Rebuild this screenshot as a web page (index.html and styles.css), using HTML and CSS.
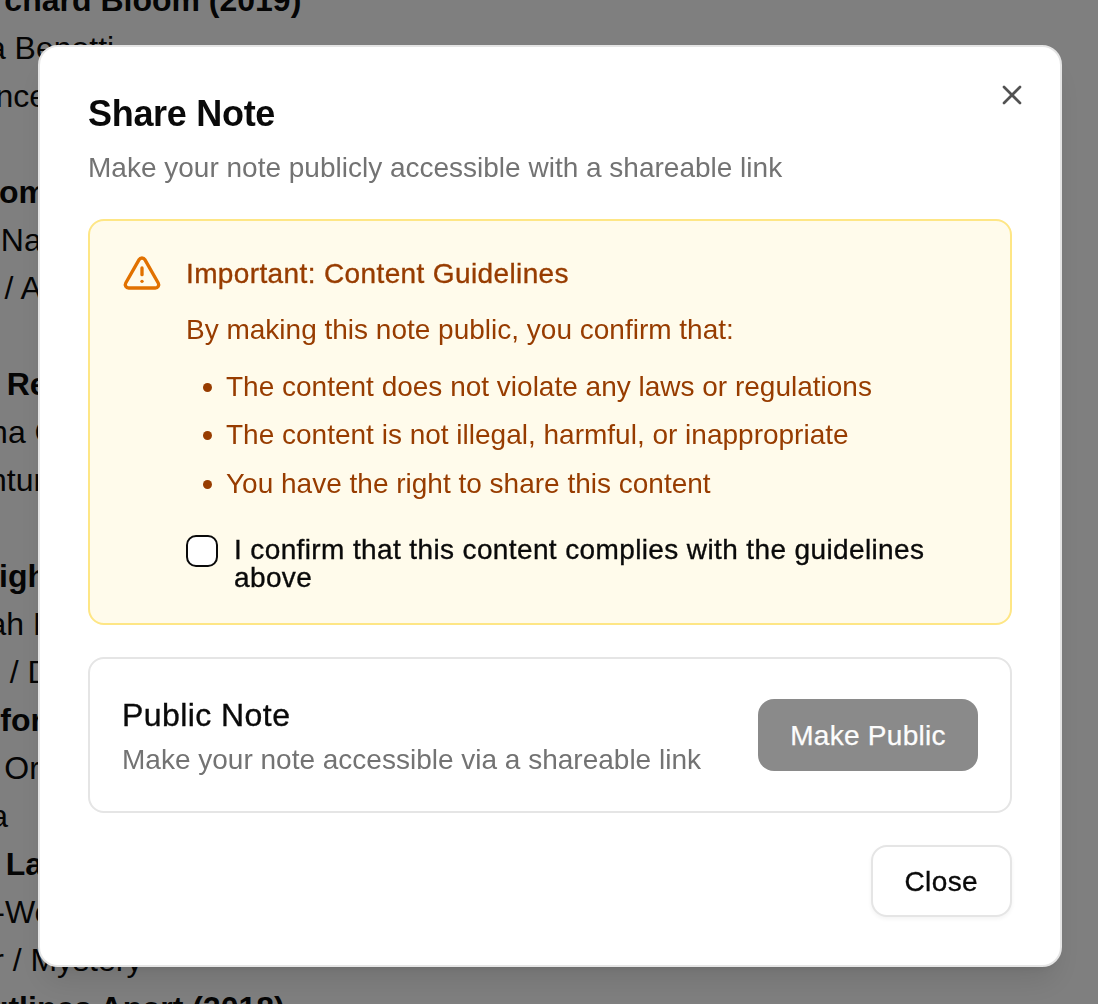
FILE: index.html
```html
<!DOCTYPE html>
<html lang="en">
<head>
<meta charset="utf-8">
<title>Share Note</title>
<link rel="stylesheet" href="styles.css">
</head>
<body>
<main class="notes">
  <p class="line title">Orchard Bloom (2019)</p>
  <p class="line left4">Lia Benotti</p>
  <p class="line">Since 2019</p>
  <p class="line blank">&nbsp;</p>
  <p class="line title">From Home (2020)</p>
  <p class="line">Li Nazari</p>
  <p class="line right2">Fi / Adventure</p>
  <p class="line blank">&nbsp;</p>
  <p class="line title far">Quiet Rest (2020)</p>
  <p class="line">Una Cole</p>
  <p class="line far">Adventure</p>
  <p class="line blank">&nbsp;</p>
  <p class="line title">Fright (2021)</p>
  <p class="line farther">Hannah Neil</p>
  <p class="line farther">Action / Drama</p>
  <p class="line title left4">In for It (2021)</p>
  <p class="line">Al Orin</p>
  <p class="line farther">Drama</p>
  <p class="line title farther2">Quiet Lanes (2018)</p>
  <p class="line left3">Hi-West</p>
  <p class="line widest">Thriller / Mystery</p>
  <p class="line title near">Outlines Apart (2018)</p>
</main>

<div class="overlay">
  <section class="dialog" role="dialog" aria-labelledby="share-title">
    <button class="dismiss" type="button" aria-label="Close">
      <svg class="dismiss-icon" viewBox="0 0 24 24" fill="none" stroke="currentColor" stroke-width="2" stroke-linecap="round" stroke-linejoin="round"><path d="M18 6 6 18"/><path d="m6 6 12 12"/></svg>
    </button>
    <header class="dialog-head">
      <h2 id="share-title" class="dialog-title">Share Note</h2>
      <p class="dialog-sub">Make your note publicly accessible with a shareable link</p>
    </header>

    <div class="warning">
      <svg class="warning-icon" viewBox="0 0 24 24" fill="none" stroke="currentColor" stroke-width="2" stroke-linecap="round" stroke-linejoin="round"><path d="m21.73 18-8-14a2 2 0 0 0-3.48 0l-8 14A2 2 0 0 0 4 21h16a2 2 0 0 0 1.73-3"/><path d="M12 9v4"/><path d="M12 17h.01"/></svg>
      <div class="warning-body">
        <h3 class="warning-title">Important: Content Guidelines</h3>
        <p class="warning-text">By making this note public, you confirm that:</p>
        <ul class="warning-list">
          <li>The content does not violate any laws or regulations</li>
          <li>The content is not illegal, harmful, or inappropriate</li>
          <li>You have the right to share this content</li>
        </ul>
        <label class="confirm">
          <input class="confirm-box" type="checkbox">
          <span class="confirm-text">I confirm that this content complies with the guidelines above</span>
        </label>
      </div>
    </div>

    <div class="public-card">
      <div class="public-info">
        <div class="public-title">Public Note</div>
        <div class="public-desc">Make your note accessible via a shareable link</div>
      </div>
      <button class="btn-primary" type="button">Make Public</button>
    </div>

    <footer class="dialog-foot">
      <button class="btn-outline" type="button">Close</button>
    </footer>
  </section>
</div>
</body>
</html>
```

FILE: styles.css
```css
* {
  box-sizing: border-box;
}

html,
body {
  height: 100%;
  margin: 0;
  overflow: hidden;
}

body {
  background: #fff;
  color: #0a0a0a;
  font-family: "Liberation Sans", Arial, sans-serif;
}

.notes {
  margin: -24px 0 0 -33px;
}

.line {
  margin: 0;
  font-size: 32px;
  line-height: 48px;
  white-space: nowrap;
}

.title {
  font-weight: 700;
}

.far {
  margin-left: -51px;
}

.farther {
  margin-left: -55px;
}

.farther2 {
  margin-left: -52px;
}

.widest {
  margin-left: -61px;
}

.near {
  margin-left: -3px;
}

.left4 {
  margin-left: -4px;
}

.left3 {
  margin-left: -3px;
}

.right2 {
  margin-left: 2px;
}

.overlay {
  position: fixed;
  inset: 0;
  display: flex;
  justify-content: center;
  align-items: flex-start;
  padding: 45px 0 0 2px;
  background: rgba(0, 0, 0, 0.5);
}

.dialog {
  position: relative;
  width: 1024px;
  padding: 48px;
  background: #fff;
  border: 2px solid #e5e5e5;
  border-radius: 20px;
  box-shadow: 0 20px 30px -6px rgba(0, 0, 0, 0.1), 0 8px 12px -8px rgba(0, 0, 0, 0.1);
}

.dismiss {
  position: absolute;
  top: 32px;
  right: 32px;
  display: flex;
  padding: 0;
  border: 0;
  background: none;
  color: #0a0a0a;
  opacity: 0.7;
}

.dismiss-icon {
  width: 32px;
  height: 32px;
}

.dialog-head {
  display: flex;
  flex-direction: column;
  gap: 16px;
}

/* medium-weight text: regular outlines slightly thickened and spaced */
.warning-title,
.confirm-text,
.public-title,
.btn-outline {
  font-weight: 400;
  letter-spacing: 0.0135em;
  -webkit-text-stroke: 0.35px currentColor;
}

/* text that sits one pixel low in its line box */
.dialog-title,
.dialog-sub,
.warning-title,
.warning-text,
.confirm-text,
.public-desc {
  padding-top: 1px;
  margin-bottom: -1px;
}

.dialog-title {
  margin-top: 0;
  font-size: 36px;
  line-height: 36px;
  font-weight: 700;
  letter-spacing: -0.3px;
}

.dialog-sub {
  margin-top: 0;
  font-size: 28px;
  line-height: 40px;
  color: #737373;
}

.warning {
  display: flex;
  gap: 24px;
  margin-top: 32px;
  padding: 32px;
  background: #fffbeb;
  border: 2px solid #fee685;
  border-radius: 16px;
  color: #973c00;
}

.warning-icon {
  flex: none;
  width: 40px;
  height: 40px;
  color: #e17100;
}

.warning-body {
  flex: 1;
  min-width: 0;
}

.warning-title {
  margin-top: 0;
  font-size: 28px;
  line-height: 40px;
}

.warning-text {
  margin-top: 16px;
  font-size: 28px;
  line-height: 40px;
}

.warning-list {
  display: flex;
  flex-direction: column;
  gap: 8.5px;
  margin: 17.5px 0 0;
  padding: 0 0 0 16.5px;
  list-style: none;
  font-size: 28px;
  line-height: 40px;
}

.warning-list li {
  display: flex;
  align-items: center;
  gap: 14.5px;
}

.warning-list li::before {
  content: "";
  flex: none;
  width: 9px;
  height: 9px;
  margin-top: 1px;
  border-radius: 50%;
  background: currentColor;
}

.confirm {
  display: flex;
  align-items: flex-start;
  gap: 16px;
  margin-top: 31.5px;
  color: #0a0a0a;
  font-size: 28px;
  line-height: 28px;
}

.confirm-box {
  appearance: none;
  flex: none;
  width: 32px;
  height: 32px;
  margin: 0;
  background: #fff;
  border: 2px solid #0a0a0a;
  border-radius: 10px;
}

.public-card {
  display: flex;
  justify-content: space-between;
  align-items: center;
  margin-top: 32px;
  padding: 32px;
  background: #fff;
  border: 2px solid #e5e5e5;
  border-radius: 16px;
}

.public-title {
  font-size: 32px;
  line-height: 48px;
}

.public-desc {
  font-size: 28px;
  line-height: 40px;
  color: #737373;
}

.btn-primary,
.btn-outline {
  height: 72px;
  padding: 2px 32px 0;
  border-radius: 16px;
  font-family: inherit;
  font-size: 28px;
  line-height: 40px;
}

.btn-primary {
  min-width: 220px;
  border: 0;
  background: #171717;
  color: #fafafa;
  opacity: 0.5;
  letter-spacing: 0.27px;
  -webkit-text-stroke: 0.25px currentColor;
}

.btn-outline {
  border: 2px solid #e5e5e5;
  background: #fff;
  color: #0a0a0a;
  box-shadow: 0 2px 4px rgba(0, 0, 0, 0.05);
}

.dialog-foot {
  display: flex;
  justify-content: flex-end;
  margin-top: 32px;
}
```
